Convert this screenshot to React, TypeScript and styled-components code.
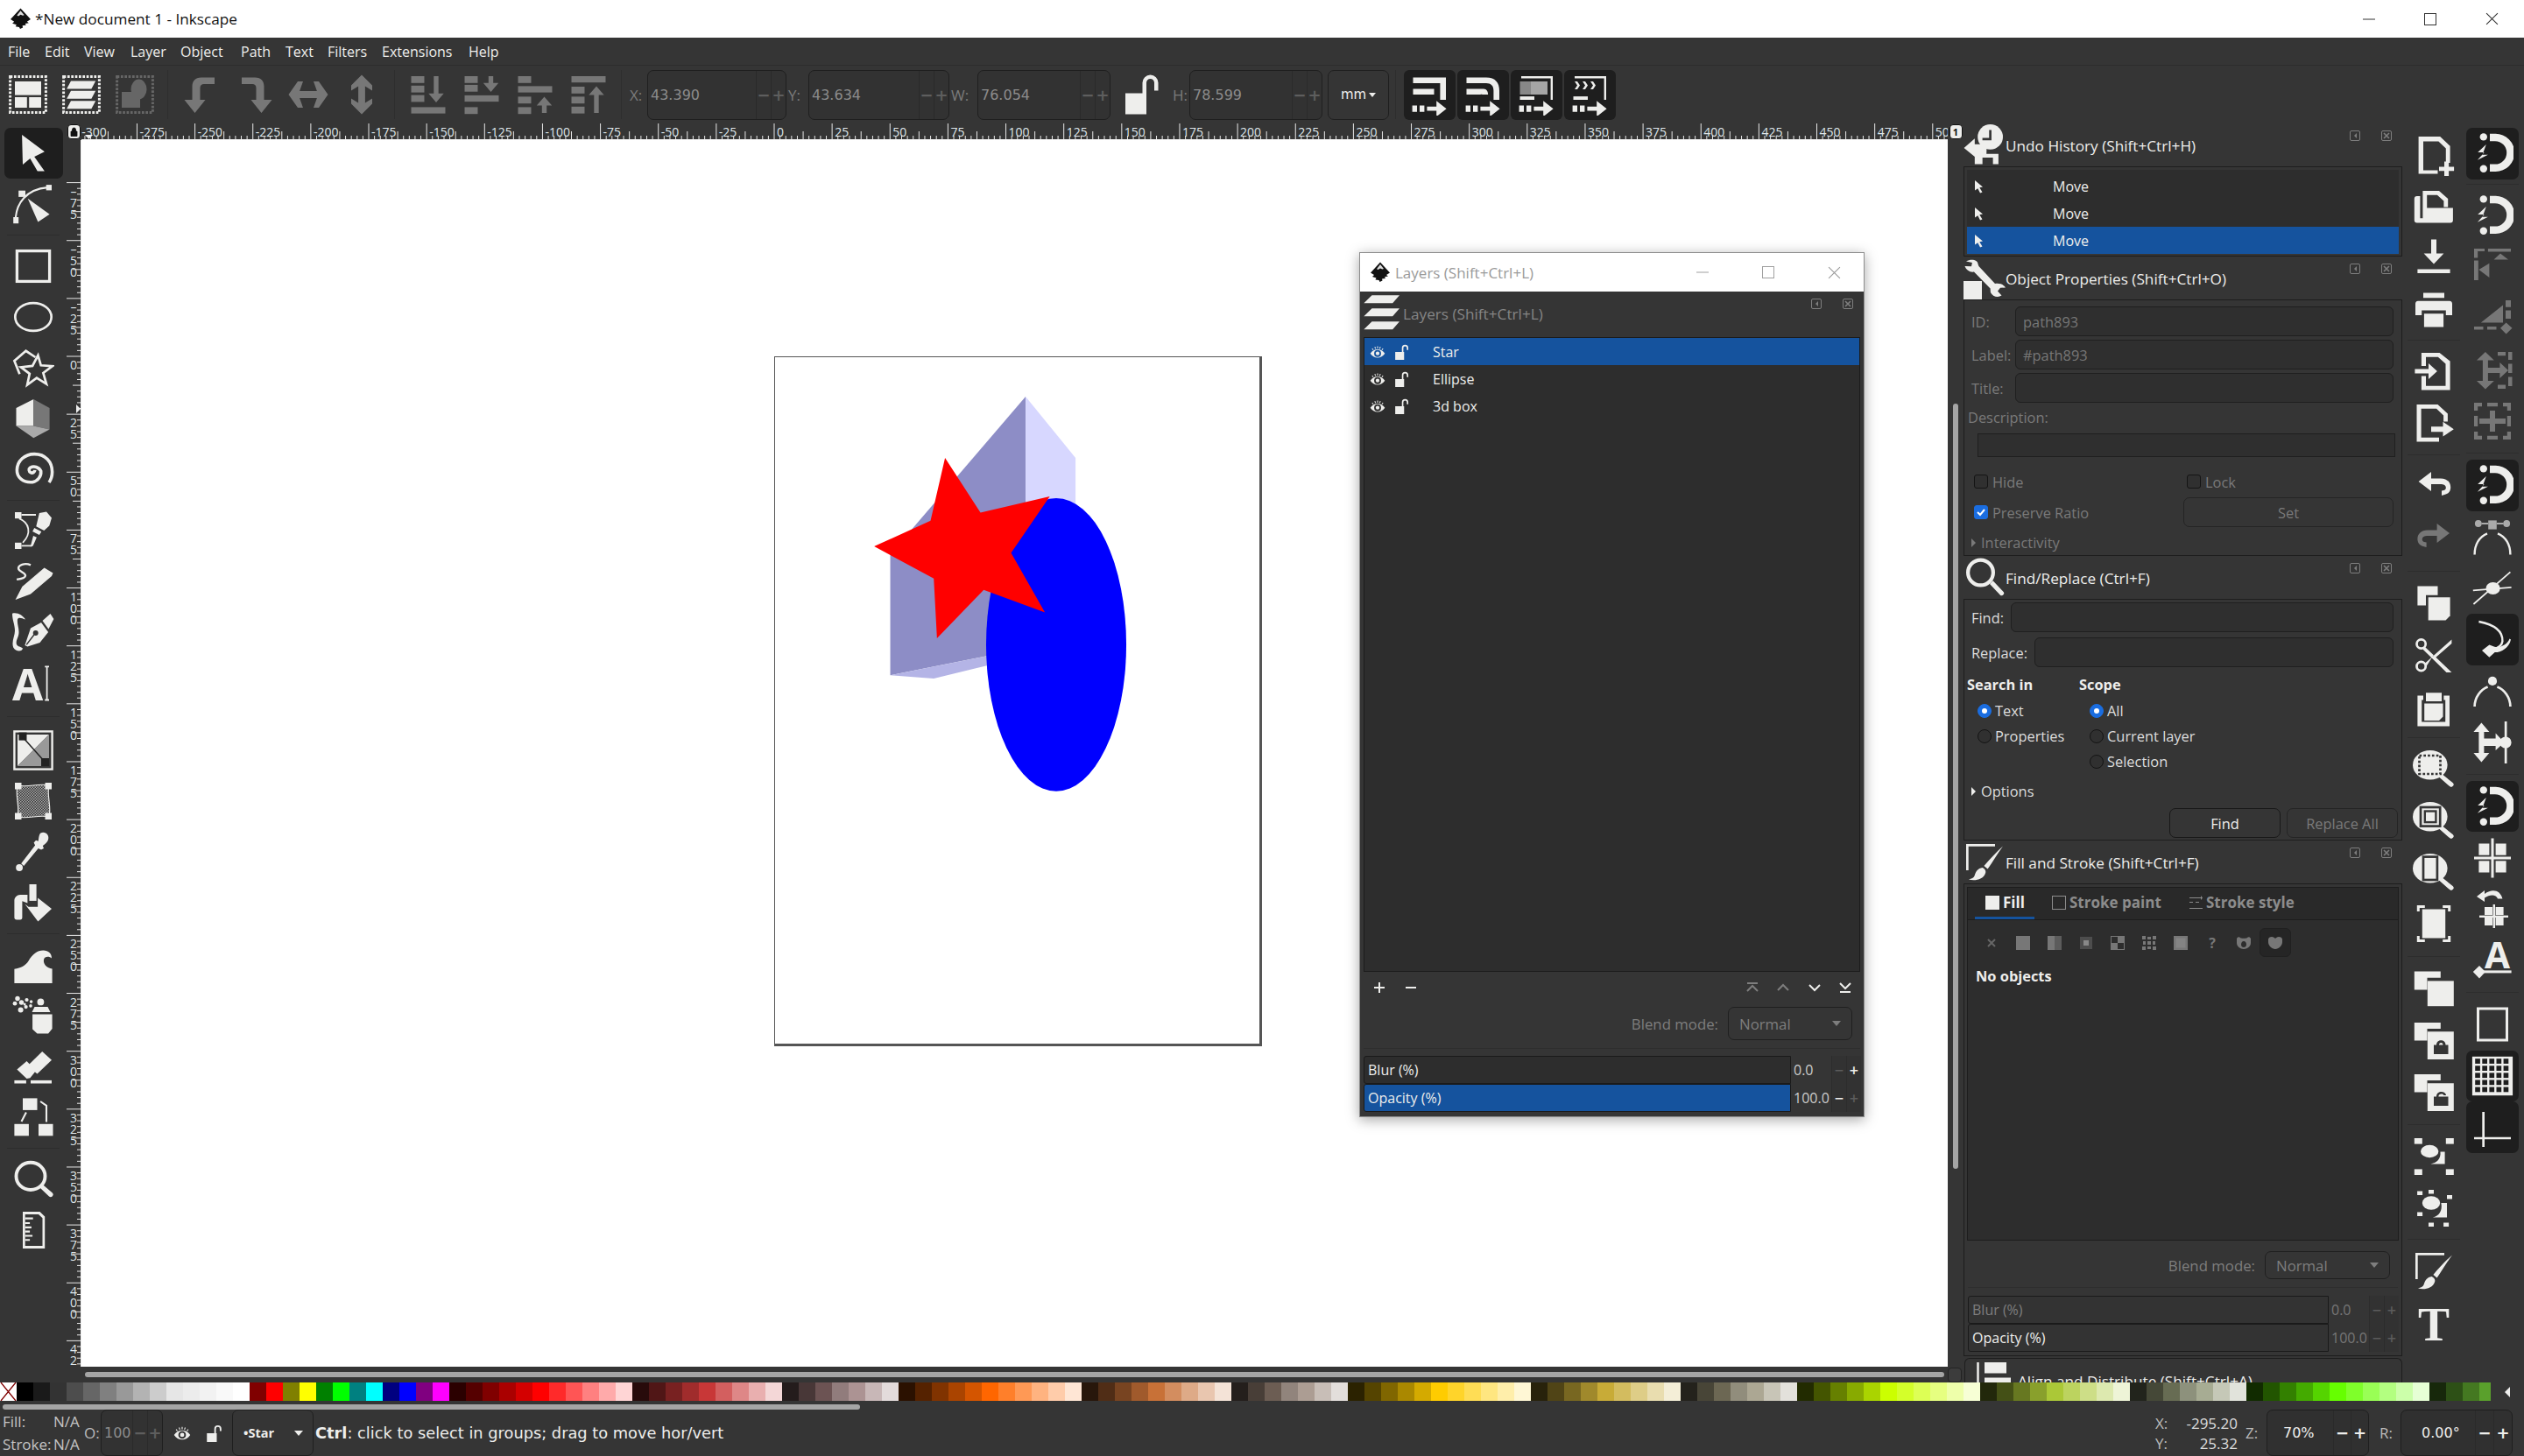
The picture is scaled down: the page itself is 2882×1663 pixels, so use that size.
import React from 'react';
import styled, { createGlobalStyle } from 'styled-components';

const UI = `"Open Sans", "Noto Sans", "Liberation Sans", sans-serif`;
const WIDE = `"DejaVu Sans", "Open Sans", sans-serif`;
const BG = '#353535';
const DARK = '#1e1e1e';
const FIELD = '#2d2d2d';
const LINE = '#1f1f1f';
const LITE = '#eeeeec';
const DIM = '#777777';
const BLUE = '#15539e';

const Global = createGlobalStyle`
  html, body { margin: 0; padding: 0; background: ${BG}; }
  body { font-family: ${UI}; font-size: 16px; color: ${LITE}; }
  * { box-sizing: border-box; }
`;

/* ---------- icons ---------- */
const IconSvg = styled.svg<{ $s: number; $c: string }>`
  width: ${p => p.$s}px;
  height: ${p => p.$s}px;
  flex: none;
  display: block;
  color: ${p => p.$c};
  fill: currentColor;
  font-family: ${UI};
`;
const Ico = ({ s = 48, c = LITE, children }: { s?: number; c?: string; children: React.ReactNode }) => (
  <IconSvg $s={s} $c={c} viewBox="0 0 16 16">{children}</IconSvg>
);
const L = (p: React.SVGProps<SVGPathElement>) => (
  <path fill="none" stroke="currentColor" strokeWidth={1} {...p} />
);

const Dotted = () => (
  <rect x="1.2" y="1.2" width="13.6" height="13.6" fill="none" stroke="currentColor" strokeWidth="1" strokeDasharray=".9 .55" />
);
const Magnet = () => (
  <>
    <path d="M7 .6h2.2a7.2 7.2 0 0 1 0 14.4H7v-2.8h2a4.4 4.4 0 0 0 0-8.8H7z" />
    <circle cx="4.6" cy="1.8" r="1.4" />
    <circle cx="4.6" cy="13.9" r="1.4" />
    <path d="M5.6 4.7 2.4 7.7h2.5L2.3 10.6 6.3 8.6H4.2z" />
  </>
);
const Lens = () => (
  <>
    <ellipse cx="6.6" cy="6.6" rx="6.6" ry="5.6" />
    <path d="M10 11.2l1.3-1 3.9 3.1a.9.9 0 0 1-1.2 1.4z" />
  </>
);
const Parallelograms = ({ y = [2, 6.6, 11.2] }: { y?: number[] }) => (
  <>{y.map(v => <path key={v} d={`M4 ${v}H13.4L11.8 ${v + 3}H2.4z`} />)}</>
);
const Bars = ({ ys }: { ys: number[] }) => (
  <>{ys.map(v => <rect key={v} x="1.5" y={v} width="5" height="2.6" />)}</>
);
const BigBar = ({ y }: { y: number }) => <rect x="1.5" y={y} width="13" height="2.4" />;
const ArrowDown = ({ x, y1, y2 }: { x: number; y1: number; y2: number }) => (
  <path d={`M${x - .9} ${y1}h1.8V${y2 - 3.4}h2L${x} ${y2}l-2.9-3.4h2z`} />
);
const ArrowUp = ({ x, y1, y2 }: { x: number; y1: number; y2: number }) => (
  <path d={`M${x - .9} ${y2}h1.8V${y1 + 3.4}h2L${x} ${y1}l-2.9 3.4h2z`} />
);
const SmallArrow = () => <path d="M1.2 12.2h1.8v2.4H1.2zM4 12.2h1.8v2.4H4zM6.8 12.6h3.6v-2.2l3.8 3-3.8 3v-2.2H6.8z" />;

const tools: Record<string, React.ReactNode> = {
  selector: <path d="M3.7 1 12.3 7.4 8.4 9.3 12.3 14.8H9.6L6.8 10 4 12.3z" />,
  node: (
    <>
      <L d="M1.3 13C1.8 8 5 2.4 13.4 1.7" strokeWidth=".7" />
      <rect x=".4" y="13" width="2" height="2.4" />
      <rect x="2.4" y="2.9" width="2.6" height="2.4" />
      <rect x="12.9" y=".7" width="2.1" height="2.1" />
      <path d="M5.9 5.9 14.2 11.9 9.8 14.8z" />
    </>
  ),
  rect: <rect x="1.8" y="2.2" width="12.4" height="11.6" fill="none" stroke="currentColor" strokeWidth="1.1" />,
  ellipse: <ellipse cx="8" cy="8" rx="6.9" ry="5.3" fill="none" stroke="currentColor" strokeWidth=".9" />,
  star: (
    <>
      <L d="M2.800 10.400 .8 5.400 5.200 1.600 8.800 4" strokeWidth=".9" />
      <polygon points="9.800,3.300 10.900,7.100 15.300,7.400 11.800,10 13,14.200 9.300,11.900 5.700,14.500 6.600,10.300 3.300,7.800 7.700,7.300" fill="none" stroke="currentColor" strokeWidth=".9" />
    </>
  ),
  box: (
    <>
      <path d="M1.5 4 8.100.7V10.800H1.500z" />
      <path d="M8.100.7 14.200 4V12.200L8.100 10.800z" fill="#777" />
      <path d="M1.500 10.800H8.100L14.200 12.200 8.100 15.400z" fill="#aaa" />
    </>
  ),
  spiral: <L strokeWidth="1.200" d="M8.600 8.300a1.100 1.100 0 1 1-1.800-.9 2.900 2.900 0 0 1 4.100 1.300 3.900 3.900 0 0 1-3.200 4.200C4 13.200 1.700 11 1.800 8.200 1.900 4.800 4.700 2.200 8.400 2.200c4.200 0 6.800 3 6.800 6.800 0 1.600-.5 3-1.200 4" />,
  bezier: (
    <>
      <rect x="1" y="1" width="2.500" height="2.400" />
      <rect x="1" y="12.600" width="2.500" height="2.400" />
      <L d="M3.500 2H9M3.500 13.800H7.500M2.600 3.400C6.500 5 7.500 9 4 12.600" strokeWidth=".6" />
      <path d="M10.300 1.300 13 .8l2 2.400-.9 3-2 1.800-3-1.600zM8.400 7l2.700 1.400-.8 1.300-2.600-1.400zM8 10l1.300.6-1.400 3.200-1 .4z" />
    </>
  ),
  pencil: (
    <>
      <L d="M7 1.800C4.800.800 2 1.800 2.400 3.300c.3 1.200 2.600 1.300 2.600 2.500 0 .8-2 1.300-3.300 1.500" strokeWidth=".8" />
      <path d="M1.200 15 3.800 10 12.200 2.800 15.500 4.800 15 6 7 12.800z" />
    </>
  ),
  callig: (
    <>
      <path d="M0 .9C2 .4 4 1.600 5 3.200 3.500 2.500 2.200 2.200 2 3.200 1.800 5 2.500 6 2.500 8 2.500 10 1.300 11 1.600 12.500 2 13.700 3.500 13.500 4 14.200 3.800 15.600 1.200 15.500.4 13.800-.4 11.500 1 9.500 1 7.500 1 5 0 3.500 0 .9z" />
      <path d="M4.800 13 7 6.500 11 4.300 13.700 8 10.500 12 5.800 13.500z" />
      <circle cx="8.900" cy="8.300" r="1" fill={BG} />
      <path d="M5.400 12.800 8.300 9" stroke={BG} strokeWidth=".5" />
      <path d="M11.500 3.700 14.500 1 15.800 3 13.800 6.800z" />
    </>
  ),
  text: (
    <>
      <text x="0" y="14.500" fontSize="17" fontWeight="700">A</text>
      <L d="M12.400 1.800H14M12.400 14.500H14M13.200 1.800V14.500" strokeWidth=".6" />
    </>
  ),
  gradient: (
    <>
      <rect x=".8" y=".8" width="14.400" height="14.400" fill="none" stroke="currentColor" strokeWidth=".8" />
      <path d="M2 2H14L2 14z" />
      <path d="M14 2V14H2z" fill="#999" />
      <rect x="2.500" y="1.200" width="3" height="3" fill="#222" />
      <rect x="11" y="11" width="3" height="3" fill="#222" />
      <L d="M4 3 12.500 12.500" stroke="#222" strokeWidth=".5" />
    </>
  ),
  mesh: (
    <>
      <defs>
        <pattern id="meshchk" width="1" height="1" patternUnits="userSpaceOnUse">
          <rect width="1" height="1" fill="#333" />
          <rect width=".5" height=".5" fill="#aaa" />
          <rect x=".5" y=".5" width=".5" height=".5" fill="#aaa" />
        </pattern>
      </defs>
      <path d="M2 2C6 3 10 1 14 2 13 6 15 10 14 14 10 13 6 15 2 14 3 10 1 6 2 2z" fill="url(#meshchk)" stroke="currentColor" strokeWidth=".4" />
      <rect x="1" y="1" width="2.500" height="2.500" />
      <rect x="12.500" y="1" width="2.500" height="2.500" />
      <rect x="1" y="12.500" width="2.500" height="2.500" />
      <rect x="12.500" y="12.500" width="2.500" height="2.500" />
    </>
  ),
  dropper: (
    <>
      <path d="M10.800.8c1.800-.8 3.600.8 2.800 2.800-.3.800-1.300 1.500-2 2.100l.4 1-1 .5-1.100-.5-5.500 6.600-1-.9 5.300-6.900-.5-1 .8-.9.9.3C10.100 3 10.100 1.300 10.800.8z" />
      <circle cx="2.700" cy="14" r="1.300" />
    </>
  ),
  bucket: (
    <>
      <path d="M6.500 1H9.200V7.300H6.500z" />
      <path d="M.8 7.200C.8 6 1.800 5 3 5h2.800v3.200L3.800 7.400v6.200a.9.9 0 0 1-1 .9H1.700a.9.9 0 0 1-.9-.9z" />
      <path d="M4.800 8.500 6.200 9.600H9.700V6.200L15 10.300 9.800 15.200z" />
    </>
  ),
  tweak: <path d="M.8 15V9.600c2.600-.4 4.200-1.300 5.400-3.100C7.600 4 9.500 2.500 11.800 2.500c2 0 3.200 1.200 3.200 3-.9-.8-2.700-.8-3 .5-.3 1.800 1.200 3.300 3.200 3.500V15z" />,
  spray: (
    <>
      <circle cx="2" cy="1.500" r=".9" /><circle cx="1" cy="3.400" r=".8" /><circle cx="3.500" cy="3" r=".9" /><circle cx="5.500" cy="2" r=".7" />
      <circle cx="7.200" cy="2.700" r=".6" /><circle cx="3.200" cy="5.800" r="1" /><circle cx="5.200" cy="4.700" r=".7" /><circle cx="7" cy="4.300" r=".6" />
      <circle cx="4.700" cy="3.700" r=".5" /><circle cx="10.800" cy="2.800" r="1.300" />
      <path d="M8.500 4.700h5l1 2h-7zM7.700 7.500h7.500V13l-1.500 1.800H9.500L7.700 13.200z" />
    </>
  ),
  eraser: (
    <>
      <path d="M5.800 7.800 11.400 2.300 15 5.600 9.500 10.800z" />
      <path d="M.8 8.200 4.500 5l3.500 3.700-2.200 2.700-1.300.3z" transform="translate(1 1)" />
      <rect x=".8" y="13.300" width="4.500" height="1.200" /><rect x="7" y="13.300" width="8" height="1.200" />
    </>
  ),
  connector: (
    <>
      <rect x="4" y=".8" width="5.500" height="4.500" />
      <rect x=".8" y="10.600" width="5.500" height="4.500" />
      <rect x="10" y="10.600" width="5.500" height="4.500" />
      <L d="M10.700 2 13 3.600V9.800M5.300 6.200 3.500 9.700" strokeWidth=".7" />
    </>
  ),
  zoom: (
    <>
      <ellipse cx="7" cy="6.800" rx="5.500" ry="5.200" fill="none" stroke="currentColor" strokeWidth="1.300" />
      <path d="M10.500 11.200l1.200-1.100 3.500 3a.9.9 0 0 1-1.200 1.400z" />
    </>
  ),
  measure: (
    <>
      <path fillRule="evenodd" d="M4 1H10.500L12.400 2.800V15H4zM4.900 2V14H11.500V3.400L10 2z" />
      <path d="M4.900 3.200h3v.7h-3zM4.900 5h1.800v.7H4.900zM4.900 6.600h2.400v.7H4.900zM4.900 8.200h1.800v.7H4.900zM4.900 9.800h2.800v.7H4.900zM4.900 11.400h1.800v.7H4.900z" />
    </>
  ),
};

const commands: Record<string, React.ReactNode> = {
  newDoc: <path d="M2.200 1H10.400L14.200 4.600V11H12.600V5.500L9.800 2.800H4V13.800H9.500V15.200H2.200zM12 10.500h1.700v2h2v1.600h-2v2H12v-2h-2v-1.600h2z" />,
  open: <path d="M3.800 6V2H10L13.400 5V8.200H11.800V5.800L9.300 3.600H5.400V8.500H15.300V13.200A1 1 0 0 1 14.300 14.200H1.600A1 1 0 0 1 .6 13.200V5A1 1 0 0 1 1.600 4H2.800V12.400H3.800V6z" />,
  save: <path d="M7 .8H9V6.200H11.800L8 10.200 4.200 6.200H7zM1.800 12.200H14.200V13.700H1.800z" />,
  print: <path d="M4 1.500H12V3.400H4zM2 4.600H14A1.100 1.100 0 0 1 15 5.700V10H12.600V8.200H3.400V10H1V5.700A1.100 1.100 0 0 1 2 4.600zM4.300 9.400H11.700V14.500H4.300z" />,
  importDoc: <path d="M3.300 1H10.200L14.200 4.200V15.200H3.300V9.800H5V13.600H12.500V5.200L9.600 2.600H5V6H3.300zM.8 7.200H6V5l3.300 3L6 11V8.800H.8z" />,
  exportDoc: <path d="M1.500 1H9.500L13.300 4.500V7.500H11.700V5.200L9 2.600H3.200V13.600H10V15.200H1.500zM7 9.400H11.500V7.600L15.600 10.400 11.500 13.200V11.400H7z" />,
  undo: <path d="M2.200 6 7 2.300V4.800H10.600C13.400 4.800 14.800 6.800 14.300 9 14 10.400 12.800 11 11 11.300V9.500C12.300 9.300 12.600 8.900 12.600 8.300 12.600 7.500 11.800 7 10.400 7H7V9.700z" />,
  redo: <path d="M14 6 9.200 2.300V4.800H5.600C2.800 4.800 1.400 6.800 1.900 9 2.200 10.400 3.400 11 5.200 11.300V9.500C3.900 9.300 3.600 8.900 3.600 8.300 3.600 7.500 4.400 7 5.800 7H9.200V9.700z" />,
  dup: (
    <>
      <path d="M1.800 1.200H9.500V4.600H5V8.500H1.800z" />
      <path d="M5.900 5.400H14.200V12.400L12.500 14.200H5.900z" />
    </>
  ),
  cut: (
    <>
      <circle cx="3.200" cy="3.500" r="1.700" fill="none" stroke="currentColor" strokeWidth=".9" />
      <circle cx="3.200" cy="12" r="1.700" fill="none" stroke="currentColor" strokeWidth=".9" />
      <path d="M4.500 4.500 14.800 14.300H12.800L3.800 5.500zM4.500 11 14.800 1.800V3.300L8.800 8.600 7.800 7.800 5.300 11.800z" />
    </>
  ),
  paste: (
    <>
      <path d="M1.800 3.500H4V5.200H3.400V13.500H12.400V5.200H11.800V3.500H14V15.200H1.800z" />
      <path d="M5 2.400H11V5.700H5zM4.400 6.500H11.500V11.500L10 13H4.400z" />
    </>
  ),
  zoomSel: (
    <>
      <Lens />
      <rect x="2.500" y="3" width="8" height="7" fill="none" stroke={BG} strokeWidth=".9" strokeDasharray=".9 .7" />
    </>
  ),
  zoomDraw: (
    <>
      <Lens />
      <rect x="3" y="3" width="7.400" height="7.200" fill="none" stroke={BG} strokeWidth=".9" />
      <rect x="4.600" y="4.500" width="4.200" height="4.200" fill="none" stroke={BG} strokeWidth=".8" />
    </>
  ),
  zoomPage: (
    <>
      <Lens />
      <rect x="4" y="2.200" width="5.300" height="8.800" fill="none" stroke={BG} strokeWidth=".9" />
    </>
  ),
  zoomCenter: (
    <>
      <path d="M1.600 1H4.600V2H2.600V3.300H1.600zM11.400 1H14.400V3.300H13.400V2H11.400zM1.600 12.700H2.600V14H4.600V15H1.600zM13.400 12.700H14.400V15H11.400V14H13.400z" />
      <rect x="3.600" y="2.500" width="8.800" height="11" />
    </>
  ),
  group: (
    <>
      <path d="M.6 1.200H10.600V3.600H5.500V8.200H.6z" />
      <path d="M5.600 4.800H15.600V14.400H5.600z" />
    </>
  ),
  groupLock: (
    <>
      <path d="M.6 1H10.600V3.300H5.500V7.800H.6z" />
      <path fillRule="evenodd" d="M5.600 4.400H15.600V15H5.600zM8 9.500V13H13.500V9.500H12.500C12.500 7.200 9 7.200 9 9.500zM10 9.500C10 8.400 11.500 8.400 11.500 9.500z" />
    </>
  ),
  groupUnlock: (
    <>
      <path d="M.6 1H10.600V3.300H5.500V7.800H.6z" />
      <path fillRule="evenodd" d="M5.600 4.400H15.600V15H5.600zM8 9.500V13H13.500V9.500H9.800C9.800 8.300 11.500 8.300 11.800 9H12.700C12.400 7.200 9 7.200 9 9.500z" />
    </>
  ),
  objOrigin: (
    <>
      <rect x=".6" y="1" width="3" height="2.200" /><rect x="12.600" y="1" width="3" height="2.200" />
      <rect x=".6" y="12.800" width="3" height="2.200" /><rect x="12.600" y="12.800" width="3" height="2.200" />
      <ellipse cx="6.400" cy="6" rx="3.400" ry="2.400" />
      <path d="M10.500 6.200H12.200V10.800H6.800C9 10.500 10.800 9 10.500 6.200z" />
    </>
  ),
  objAlign: (
    <>
      <rect x="1.700" y="1.500" width="2" height="1.500" /><rect x="6" y="1" width="2" height="1.500" /><rect x="13" y="3" width="2" height="1.500" />
      <rect x="1.700" y="9.500" width="2" height="1.500" /><rect x="6" y="13.500" width="2" height="1.500" /><rect x="11.700" y="13.500" width="2" height="1.500" />
      <ellipse cx="7" cy="6" rx="3.400" ry="2.600" />
      <path d="M10.800 6H13V11.500H7.600C10 11 11.400 9 10.800 6z" />
    </>
  ),
  fillStroke: (
    <>
      <path d="M1 1H12V1.900H1.900V11H1z" />
      <path d="M15 1.800C13 4.500 11 8 9.200 10.500L7.800 9.300C10 6.800 12.500 4 15 1.800zM7.200 10c-1.700.3-2.500 1.300-3 3.100-.2.700-1.200 1.200-2.200 1.400 2.200.6 5.600.2 6.400-2.600.2-.8-.3-1.500-1.200-1.900z" />
    </>
  ),
  textFont: <text x="8" y="14.500" fontSize="18" fontWeight="700" textAnchor="middle" fontFamily='"Liberation Serif", serif'>T</text>,
};

const gridCells: React.ReactNode[] = [];
for (let r = 0; r < 5; r++) {
  for (let c = 0; c < 5; c++) {
    gridCells.push(<rect key={`${r}-${c}`} x={1.4 + c * 2.7} y={1.400 + r * 2.7} width="1.900" height="1.900" fill={DARK} />);
  }
}

const snapIcons: Record<string, React.ReactNode> = {
  magnet: <Magnet />,
  bbox: (
    <g fill={DIM}>
      <path d="M1 1H5V2H2.400V4.500H1zM1 5.500H2.600V13H1zM6.300 1H15V2.200H6.300zM2.800 9 6.800 6.600V12zM8.500 5.200 11 2.800 14 5.200z" />
    </g>
  ),
  bboxEdge: (
    <g fill={DIM}>
      <path d="M13 1H15V3.600H13zM13 4.800H15V8H13zM3.600 9.500 12 2.800V9.500zM1 11H4.500V12.200H1zM6 11H9.500V12.200H6zM11 11.600 13.200 9.500 15.500 11.600 13.200 13.800z" />
    </g>
  ),
  bboxCenter: (
    <g fill={DIM}>
      <path d="M10 1H13V2.400H10zM14 1H15.500V4H14zM14 5.500H15.500V9H14zM14 10.500H15.500V14H14zM10 13.500H13V15H10zM5.300 1 8.600 4.200H6.300V7H10.800V5L14 8 10.800 11V9H6.300V12H8.600L5.300 15.200 2 12H4.300V4.200H2z" />
    </g>
  ),
  bboxCross: (
    <g fill={DIM}>
      <path d="M1 1H4V2.400H2.400V4H1zM6 1H10V2.400H6zM12 1H15V4H13.600V2.400H12zM1 6H2.400V10H1zM13.600 6H15V10H13.600zM1 12H2.400V13.600H4V15H1zM6 13.600H10V15H6zM12 13.600H13.600V12H15V15H12zM7 4H9V7H13V9H9V12H7V9H3V7H7z" />
    </g>
  ),
  nodesHandle: (
    <>
      <path d="M1.200 14.800C1.200 11 3 8 6 6.800M14.800 14.800C14.800 11 13 8 10 6.800" fill="none" stroke="currentColor" strokeWidth=".8" />
      <rect x="6.400" y="1.800" width="3.200" height="3.400" fill="#aaa" />
      <circle cx="2.600" cy="3" r="1.300" fill="#aaa" /><circle cx="13.400" cy="3" r="1.300" fill="#aaa" />
      <path d="M3.800 3H6.400M9.600 3H12.200" stroke="#aaa" strokeWidth=".6" />
    </>
  ),
  intersect: (
    <>
      <ellipse cx="8.200" cy="8" rx="2.700" ry="2.300" />
      <path d="M.6 8.800 15.200 7.600M.8 14 14.800 1.800" stroke="currentColor" strokeWidth=".6" />
    </>
  ),
  path: (
    <>
      <path d="M2.800 1C8 2 12 4 11.800 8.500 11.600 10 10 11 8.800 11.500" fill="none" stroke="currentColor" strokeWidth=".8" />
      <path d="M8.800 10.600C11 11 13.600 9.800 14.500 7.500L15 7.800C14.300 11 11.500 12.600 8.900 12.700L6.800 14.600 4 12 6.800 9.800z" />
    </>
  ),
  smooth: (
    <>
      <path d="M1.200 14C1.200 10.500 3.500 7.500 6.200 6.500M14.800 14C14.800 10.500 12.500 7.500 9.800 6.500" fill="none" stroke="currentColor" strokeWidth=".9" />
      <circle cx="8" cy="4.300" r="1.700" />
    </>
  ),
  midpoint: (
    <>
      <path d="M3.800.5 6.800 4H4.800V6.500H9.200V4.500L12.500 8 9.200 11V9.300H4.800V12H6.800L3.800 15.500.8 12H2.800V4H.8z" />
      <circle cx="13" cy="8" r="2.200" />
      <rect x="12.600" y="0" width=".9" height="16" />
    </>
  ),
  guide: (
    <>
      <rect x="2.800" y="2.500" width="4" height="4.400" /><rect x="9.200" y="2.500" width="4" height="4.400" />
      <rect x="2.800" y="9.100" width="4" height="4.400" /><rect x="9.200" y="9.100" width="4" height="4.400" />
      <rect x="1" y="7.500" width="14" height="1" /><rect x="7.500" y=".5" width="1" height="15" />
    </>
  ),
  guideGrid: (
    <>
      <path d="M2 3 5 .7V2C8-.2 11 .6 11.800 3.800H10C9.400 2.200 7.200 2 5 3.500V5z" />
      <rect x="5" y="7" width="3" height="3" /><rect x="9.200" y="7" width="3" height="3" />
      <rect x="5" y="11" width="3" height="3" /><rect x="9.200" y="11" width="3" height="3" />
      <rect x="3" y="10.200" width="11" height=".8" /><rect x="8.200" y="6" width=".8" height="9" />
    </>
  ),
  textBase: (
    <>
      <text x="9.800" y="11" fontSize="14" fontWeight="700" textAnchor="middle">A</text>
      <rect x="4.200" y="11.800" width="11" height="1" />
      <path d="M.6 12.300 3 10l2.300 2.300L3 14.800z" />
    </>
  ),
  page: <rect x="2.500" y="2" width="11" height="12" fill="none" stroke="currentColor" strokeWidth="1" />,
  grid: (
    <>
      <rect x=".3" y=".6" width="15.400" height="14.800" />
      {gridCells}
    </>
  ),
  guides: <path d="M4.100 2H5V11.600H15V12.400H5V15.300H4.100V12.400H1V11.600H4.100z" />,
};

const InkLogo = ({ s = 24 }: { s?: number }) => (
  <svg width={s} height={s} viewBox="0 0 24 24" style={{ flex: 'none' }}>
    <path fill="#111" d="M12 .5 23 12.500 19 15l2 1.500-4 .800 1 1.700-4 .500.500 2-3 1.500-1-2-4-.500 1-2L3 17l2-2-4-2.500z" />
    <path fill="#ddd" d="M12 3 16 8l-1.600.5L12 7.500 9.600 9 8 8.200z" />
    <path fill="#fff" d="M7 13.500l2 1.200M15 13l2-1" />
  </svg>
);

/* ---------- chrome ---------- */
const Shell = styled.div`
  width: 2882px;
  height: 1663px;
  background: ${BG};
  display: flex;
  flex-direction: column;
  overflow: hidden;
`;
const TitleBar = styled.header`
  height: 43px;
  background: #fff;
  color: #111;
  display: flex;
  align-items: center;
  padding-left: 11px;
  gap: 4px;
  font-size: 17.2px;
  flex: none;
`;
const TitleText = styled.span`
  flex: 1;
`;
const WinBtn = styled.div`
  width: 70px;
  height: 100%;
  display: flex;
  align-items: center;
  justify-content: center;
`;
const WinGroup = styled.div`
  display: flex;
  height: 100%;
  margin-right: 2px;
`;
const MenuBar = styled.nav`
  height: 32px;
  flex: none;
  display: flex;
  align-items: center;
  border-bottom: 1px solid #2d2d2d;
  font-size: 16px;
`;
const MenuItem = styled.span<{ $w: number }>`
  width: ${p => p.$w}px;
  padding-left: 9px;
  flex: none;
`;
const ToolBar = styled.div`
  height: 66px;
  flex: none;
  display: flex;
  align-items: center;
  padding-left: 1px;
`;
const TopBtn = styled.div<{ $w?: number; $pl?: number }>`
  width: ${p => p.$w ?? 61}px;
  height: 57px;
  display: flex;
  align-items: center;
  justify-content: center;
  padding-left: ${p => p.$pl ?? 0}px;
  flex: none;
`;
const TopSep = styled.div`
  width: 1px;
  height: 56px;
  background: #2e2e2e;
  margin: 0 7px;
  flex: none;
`;
const TopLabel = styled.span<{ $w: number }>`
  width: ${p => p.$w}px;
  padding-left: 2px;
  color: #7b7b7b;
  font-size: 17px;
  flex: none;
`;
const Spin = styled.div<{ $w: number; $h?: number; $lit?: boolean }>`
  width: ${p => p.$w}px;
  height: ${p => p.$h ?? 57}px;
  border: 1.5px solid ${LINE};
  border-radius: 7px;
  display: flex;
  align-items: center;
  background: ${p => (p.$lit ? '#303030' : '#323232')};
  color: ${p => (p.$lit ? LITE : '#8c8c8c')};
  flex: none;
  font-family: ${WIDE};
  font-size: 16px;
`;
const SpinValue = styled.span<{ $pad?: number }>`
  flex: 1;
  padding-left: ${p => p.$pad ?? 3}px;
  white-space: nowrap;
`;
const SpinCell = styled.span<{ $w?: number; $lit?: boolean }>`
  width: ${p => p.$w ?? 17}px;
  height: 100%;
  border-left: 1px solid #2a2a2a;
  display: flex;
  align-items: center;
  justify-content: center;
  color: ${p => (p.$lit ? LITE : '#5e5e5e')};
  font-size: 18px;
  font-weight: 600;
  flex: none;
`;
const UnitBox = styled.div`
  width: 70px;
  height: 57px;
  margin-left: 6px;
  border: 1.5px solid ${LINE};
  border-radius: 7px;
  display: flex;
  align-items: center;
  justify-content: center;
  gap: 3px;
  font-family: ${WIDE};
  font-size: 15px;
  flex: none;
`;
const ScaleGroup = styled.div`
  display: flex;
  padding-left: 2px;
  flex: none;
`;
const ScaleBtn = styled.div`
  width: 59px;
  height: 57px;
  border-radius: 6px;
  background: ${DARK};
  margin-right: 2px;
  display: flex;
  align-items: center;
  justify-content: center;
  flex: none;
`;
const Tri = styled.span<{ $dir?: 'down' | 'right' | 'left'; $c?: string; $s?: number }>`
  display: inline-block;
  width: 0;
  height: 0;
  flex: none;
  ${p => {
    const s = p.$s ?? 5;
    const c = p.$c ?? LITE;
    if (p.$dir === 'right') return `border-top:${s}px solid transparent;border-bottom:${s}px solid transparent;border-left:${s}px solid ${c};`;
    if (p.$dir === 'left') return `border-top:${s}px solid transparent;border-bottom:${s}px solid transparent;border-right:${s}px solid ${c};`;
    return `border-left:${s}px solid transparent;border-right:${s}px solid transparent;border-top:${s + 1}px solid ${c};`;
  }}
`;

const Main = styled.div`
  height: 1438px;
  flex: none;
  display: flex;
  overflow: hidden;
`;
const ToolColumn = styled.aside<{ $w: number; $top: number; $ml?: number }>`
  width: ${p => p.$w}px;
  margin-left: ${p => p.$ml ?? 0}px;
  padding-top: ${p => p.$top}px;
  flex: none;
  display: flex;
  flex-direction: column;
  align-items: center;
`;
const ColBtn = styled.div<{ $h: number; $active?: boolean; $w: number }>`
  width: ${p => p.$w}px;
  height: ${p => p.$h}px;
  border-radius: 7px;
  background: ${p => (p.$active ? DARK : 'transparent')};
  display: flex;
  align-items: center;
  justify-content: center;
  flex: none;
`;
const ColSep = styled.div<{ $h: number }>`
  height: ${p => p.$h}px;
  width: 60px;
  flex: none;
  display: flex;
  align-items: center;
  &::after {
    content: '';
    width: 100%;
    height: 1px;
    background: #2d2d2d;
  }
`;

/* ---------- canvas ---------- */
const CanvasArea = styled.div`
  width: 2166px;
  flex: none;
  display: flex;
  flex-direction: column;
`;
const RulerRow = styled.div`
  height: 19px;
  display: flex;
  flex: none;
`;
const Corner = styled.div<{ $w: number }>`
  width: ${p => p.$w}px;
  flex: none;
  display: flex;
  align-items: center;
  justify-content: center;
`;
const CornerChip = styled.div`
  width: 15px;
  height: 17px;
  border-radius: 4px;
  background: ${LITE};
  border: 1.5px solid #111;
  color: #111;
  font-size: 11px;
  font-weight: 700;
  display: flex;
  align-items: center;
  justify-content: center;
`;
const RulerSvg = styled.svg`
  display: block;
  flex: none;
  font-family: ${UI};
`;
const CanvasRow = styled.div`
  flex: 1;
  display: flex;
  min-height: 0;
  height: 1401px;
`;
const Surface = styled.div`
  width: 2131px;
  height: 1401px;
  background: #fff;
  position: relative;
  flex: none;
`;
const VTrack = styled.div`
  width: 18px;
  flex: none;
  padding: 301px 0 0 6px;
`;
const VThumb = styled.div`
  width: 6px;
  height: 874px;
  border-radius: 3px;
  background: #a5a5a5;
`;
const HTrack = styled.div`
  height: 18px;
  flex: none;
  padding: 6px 4px 0 21px;
  display: flex;
  gap: 4px;
  align-items: flex-start;
`;
const HThumb = styled.div`
  flex: 1;
  height: 6px;
  border-radius: 3px;
  background: #a5a5a5;
`;
const CmsButton = styled.div`
  width: 16px;
  height: 17px;
  margin-top: -5px;
  margin-right: -2px;
  border-radius: 4px;
  border: 1px solid #222;
  background: #3c3c3c;
  flex: none;
`;
const Page = styled.div`
  position: absolute;
  left: 791px;
  top: 247px;
  width: 557px;
  height: 788px;
  background: #fff;
  border: 1.5px solid #555;
  border-right-width: 3px;
  border-bottom-width: 3px;
`;
const Art = styled.svg`
  display: block;
  width: 100%;
  height: 100%;
  overflow: visible;
`;

/* ---------- floating layers dialog ---------- */
const Float = styled.section`
  position: absolute;
  left: 1459px;
  top: 128px;
  width: 577px;
  height: 988px;
  background: ${BG};
  border: 1px solid #8d8d8d;
  box-shadow: 0 3px 14px rgba(0, 0, 0, .35);
  display: flex;
  flex-direction: column;
`;
const FloatTitle = styled.div`
  height: 44px;
  background: #fff;
  color: #9a9a9a;
  display: flex;
  align-items: center;
  padding-left: 11px;
  gap: 5px;
  font-size: 17px;
  flex: none;
`;
const FloatName = styled.span`
  flex: 1;
`;
const FloatWinBtn = styled.div<{ $w: number }>`
  width: ${p => p.$w}px;
  height: 100%;
  display: flex;
  align-items: center;
  justify-content: center;
  flex: none;
`;
const DlgHeader = styled.div<{ $dim?: boolean; $h?: number }>`
  height: ${p => p.$h ?? 49}px;
  display: flex;
  align-items: flex-end;
  flex: none;
  color: ${p => (p.$dim ? '#858585' : LITE)};
  font-size: 17.2px;
`;
const LayersGlyph = styled.span`
  padding: 0 4px 4px 3px;
  flex: none;
`;
const HeaderLabel = styled.span`
  flex: 1;
  align-self: center;
  white-space: nowrap;
  padding-top: 2px;
`;
const MiniGroup = styled.div`
  display: flex;
  gap: 24px;
  align-self: flex-start;
  padding: 8px 12px 0 0;
`;
const Mini = styled.div`
  width: 12px;
  height: 12px;
  border: 1px solid #7e7e7e;
  border-radius: 2px;
  display: flex;
  align-items: center;
  justify-content: center;
  color: #7e7e7e;
`;
const ListFrame = styled.div`
  margin: 3px 4px 0;
  height: 725px;
  background: ${FIELD};
  border: 1px solid #1c1c1c;
  flex: none;
`;
const LayerRow = styled.div<{ $sel?: boolean }>`
  height: 31px;
  display: flex;
  align-items: center;
  background: ${p => (p.$sel ? BLUE : 'transparent')};
  font-size: 16px;
`;
const LayerEye = styled.span`
  width: 34px;
  padding-left: 6px;
  flex: none;
`;
const LayerLock = styled.span`
  width: 44px;
  flex: none;
`;
const ListTools = styled.div`
  height: 36px;
  display: flex;
  align-items: center;
  padding: 0 3px 0 4px;
  flex: none;
`;
const Spacer = styled.div`
  flex: 1;
`;
const GlyphBtn = styled.span<{ $w?: number; $c?: string }>`
  width: ${p => p.$w ?? 36}px;
  display: flex;
  justify-content: center;
  color: ${p => p.$c ?? LITE};
  flex: none;
`;
const BlendRow = styled.div<{ $pad: string; $h?: number }>`
  display: flex;
  align-items: center;
  justify-content: flex-end;
  gap: 11px;
  padding: ${p => p.$pad};
  color: #7e7e7e;
  font-size: 16.8px;
  flex: none;
`;
const SelectBox = styled.div<{ $w: number; $h: number }>`
  width: ${p => p.$w}px;
  height: ${p => p.$h}px;
  border: 1.5px solid ${LINE};
  border-radius: 7px;
  display: flex;
  align-items: center;
  justify-content: space-between;
  padding: 0 12px;
`;
const HRule = styled.div<{ $top?: number; $bottom?: number }>`
  height: 1px;
  background: #2e2e2e;
  margin: ${p => p.$top ?? 0}px 4px ${p => p.$bottom ?? 0}px;
  flex: none;
`;
const SliderRow = styled.div<{ $lit?: boolean; $h?: number }>`
  height: ${p => p.$h ?? 32}px;
  display: flex;
  align-items: stretch;
  margin: 0 0 0 4px;
  font-size: 16px;
  color: ${p => (p.$lit ? LITE : '#7e7e7e')};
  flex: none;
`;
const SliderTrack = styled.div<{ $bg?: string; $lit?: boolean; $w: number }>`
  width: ${p => p.$w}px;
  background: ${p => p.$bg ?? FIELD};
  border: 1px solid #1a1a1a;
  border-radius: 3px 0 0 3px;
  display: flex;
  align-items: center;
  padding-left: 4px;
  color: ${p => (p.$lit ? LITE : 'inherit')};
  flex: none;
`;
const SliderValue = styled.span<{ $c?: string }>`
  width: 46px;
  padding-left: 3px;
  align-self: center;
  white-space: nowrap;
  flex: none;
  color: ${p => p.$c ?? 'inherit'};
`;
const SliderStep = styled.span<{ $lit?: boolean }>`
  width: 17px;
  display: flex;
  align-items: center;
  justify-content: center;
  background: #323232;
  border-left: 1px solid #2c2c2c;
  color: ${p => (p.$lit ? LITE : '#5c5c5c')};
  font-size: 18px;
  font-weight: 600;
  flex: none;
`;

/* ---------- dock ---------- */
const Dock = styled.div`
  width: 501px;
  flex: none;
  display: flex;
  flex-direction: column;
`;
const Frame = styled.div<{ $h: number; $p?: string }>`
  height: ${p => p.$h}px;
  border: 1.5px solid #1d1d1d;
  padding: ${p => p.$p ?? '0'};
  flex: none;
  display: flex;
  flex-direction: column;
`;
const HistoryList = styled.div`
  background: ${FIELD};
  height: 95px;
  padding-top: 3px;
`;
const HistoryRow = styled.div<{ $sel?: boolean }>`
  height: 31px;
  display: flex;
  align-items: center;
  padding-left: 6px;
  gap: 76px;
  font-size: 16px;
  background: ${p => (p.$sel ? BLUE : 'transparent')};
`;
const FormRow = styled.div<{ $lit?: boolean; $top?: number; $label: number }>`
  display: grid;
  grid-template-columns: ${p => p.$label}px 1fr;
  align-items: center;
  padding: ${p => p.$top ?? 0}px 9px 0 8px;
  color: ${p => (p.$lit ? '#ddd' : '#7a7a7a')};
  font-size: 16.4px;
  flex: none;
`;
const Entry = styled.div<{ $h?: number }>`
  height: ${p => p.$h ?? 34}px;
  background: #2f2f2f;
  border: 1.5px solid ${LINE};
  border-radius: 6px;
  padding-left: 8px;
  display: flex;
  align-items: center;
  color: #777;
`;
const DescLabel = styled.div`
  margin: 6px 0 0 4px;
  height: 22px;
  line-height: 22px;
  color: #7a7a7a;
  font-size: 16.4px;
`;
const DescBox = styled.div`
  height: 27px;
  margin: 7px 7px 0 15px;
  border: 1.5px solid ${LINE};
  background: #2f2f2f;
  flex: none;
`;
const CheckGrid = styled.div`
  display: grid;
  grid-template-columns: 243px 1fr;
  padding: 15px 9px 0 11px;
  color: #7a7a7a;
  font-size: 16.4px;
  row-gap: 0;
  align-items: center;
  flex: none;
`;
const CheckLine = styled.div<{ $h: number }>`
  height: ${p => p.$h}px;
  display: flex;
  align-items: center;
  gap: 5px;
  white-space: nowrap;
`;
const Box = styled.span<{ $on?: boolean }>`
  width: 16px;
  height: 16px;
  border-radius: 3px;
  border: 1px solid ${p => (p.$on ? '#1a6de0' : '#141414')};
  background: ${p => (p.$on ? '#1a6de0' : '#303030')};
  display: flex;
  align-items: center;
  justify-content: center;
  flex: none;
`;
const PlainBtn = styled.div<{ $w?: number; $lit?: boolean; $h?: number; $ml?: number }>`
  ${p => (p.$w ? `width:${p.$w}px;` : '')}
  height: ${p => p.$h ?? 34}px;
  margin-left: ${p => p.$ml ?? 0}px;
  border: 1.5px solid ${p => (p.$lit ? '#181818' : '#242424')};
  border-radius: 7px;
  display: flex;
  align-items: center;
  justify-content: center;
  color: ${p => (p.$lit ? LITE : '#7a7a7a')};
  flex: none;
`;
const Expander = styled.div<{ $lit?: boolean; $top: number }>`
  display: flex;
  align-items: center;
  gap: 6px;
  padding: ${p => p.$top}px 0 0 8px;
  height: auto;
  color: ${p => (p.$lit ? '#ddd' : '#7a7a7a')};
  font-size: 16.4px;
  flex: none;
`;
const ScopeColumns = styled.div`
  display: flex;
  padding: 8px 0 0 3px;
  flex: none;
`;
const ScopeCol = styled.div<{ $w: number }>`
  width: ${p => p.$w}px;
  display: flex;
  flex-direction: column;
`;
const ScopeHead = styled.div`
  font-weight: 700;
  font-size: 16.4px;
  height: 27px;
  color: ${LITE};
`;
const RadioLine = styled.div`
  height: 29px;
  padding-left: 12px;
  display: flex;
  align-items: center;
  gap: 4px;
  font-size: 16.4px;
  color: #ddd;
`;
const Radio = styled.span<{ $on?: boolean }>`
  width: 16px;
  height: 16px;
  border-radius: 50%;
  flex: none;
  background: ${p => (p.$on ? '#1a6de0' : '#303030')};
  border: 1px solid ${p => (p.$on ? '#1a6de0' : '#141414')};
  display: flex;
  align-items: center;
  justify-content: center;
  &::after {
    content: '';
    width: 6px;
    height: 6px;
    border-radius: 50%;
    background: ${p => (p.$on ? '#fff' : 'transparent')};
  }
`;
const ButtonRow = styled.div`
  display: flex;
  justify-content: flex-end;
  gap: 7px;
  padding: 8px 4px 0 0;
  font-size: 16.4px;
  flex: none;
`;
const Notebook = styled.div`
  margin: 3px;
  height: 404px;
  background: ${FIELD};
  border: 1px solid #1d1d1d;
  flex: none;
  display: flex;
  flex-direction: column;
`;
const TabBar = styled.div`
  height: 37px;
  display: flex;
  gap: 8px;
  padding-left: 8px;
  border-bottom: 1px solid #1d1d1d;
  background: #292929;
  flex: none;
`;
const Tab = styled.div<{ $on?: boolean; $w: number }>`
  width: ${p => p.$w}px;
  display: flex;
  align-items: center;
  gap: 4px;
  padding-left: 12px;
  font-weight: 700;
  font-size: 17px;
  color: ${p => (p.$on ? LITE : '#8c8c8c')};
  border-bottom: 3px solid ${p => (p.$on ? BLUE : 'transparent')};
  white-space: nowrap;
  flex: none;
`;
const PaintRow = styled.div`
  display: flex;
  padding: 9px 0 0 9px;
  flex: none;
`;
const PaintBtn = styled.div<{ $on?: boolean }>`
  width: 36px;
  height: 33px;
  display: flex;
  align-items: center;
  justify-content: center;
  border-radius: 6px;
  background: ${p => (p.$on ? '#252525' : 'transparent')};
  border: 1px solid ${p => (p.$on ? '#202020' : 'transparent')};
  flex: none;
`;
const NoObjects = styled.div`
  font-weight: 700;
  font-size: 16.4px;
  padding: 10px 0 0 9px;
  color: ${LITE};
`;
const AlignHeader = styled.div`
  margin: 2px 0 0 1px;
  height: 60px;
  border: 1.5px solid #1d1d1d;
  border-bottom: 0;
  border-radius: 6px 6px 0 0;
  display: flex;
  align-items: flex-start;
  padding: 4px 0 0 12px;
  gap: 8px;
  font-size: 17.2px;
  flex: none;
`;
const AlignLabel = styled.span`
  padding-top: 10px;
  flex: 1;
`;
const AlignCaret = styled.span`
  padding: 16px 28px 0 0;
`;

/* ---------- palette / status ---------- */
const PaletteRow = styled.div`
  height: 21px;
  display: flex;
  flex: none;
  align-items: stretch;
`;
const SwatchStrip = styled.div`
  width: 2825px;
  display: flex;
  overflow: hidden;
  flex: none;
`;
const Swatch = styled.div`
  width: 19px;
  flex: none;
`;
const NoneSwatch = styled.svg`
  width: 19px;
  height: 21px;
  flex: none;
  display: block;
`;
const PaletteEnd = styled.div`
  flex: 1;
  display: flex;
  align-items: center;
  justify-content: flex-end;
  padding-right: 16px;
`;
const PaletteTrack = styled.div`
  height: 10px;
  padding: 4px 0 0 3px;
  flex: none;
`;
const PaletteThumb = styled.div`
  width: 979px;
  height: 6px;
  border-radius: 3px;
  background: #a5a5a5;
`;
const Status = styled.footer`
  height: 53px;
  flex: none;
  display: flex;
  align-items: center;
  padding-right: 13px;
  font-size: 16px;
`;
const FillStroke = styled.div`
  width: 96px;
  flex: none;
  padding-left: 3px;
  display: grid;
  grid-template-columns: 58px 1fr;
  row-gap: 5px;
  color: #c4c4c4;
  line-height: 21px;
  font-size: 17px;
`;
const StatusKey = styled.span<{ $w?: number; $c?: string; $pl?: number }>`
  ${p => (p.$w ? `width:${p.$w}px;` : '')}
  padding-left: ${p => p.$pl ?? 0}px;
  color: ${p => p.$c ?? '#bbb'};
  font-size: 17px;
  flex: none;
`;
const StatusIcon = styled.span<{ $w: number }>`
  width: ${p => p.$w}px;
  display: flex;
  justify-content: center;
  flex: none;
`;
const LayerCombo = styled.div`
  width: 93px;
  height: 53px;
  border: 1.5px solid ${LINE};
  border-radius: 7px;
  display: flex;
  align-items: center;
  justify-content: space-between;
  padding: 0 11px 0 12px;
  font-size: 14.5px;
  font-weight: 700;
  flex: none;
`;
const Message = styled.div`
  flex: 1;
  padding-left: 2px;
  white-space: nowrap;
  font-family: ${WIDE};
  font-size: 17.8px;
`;
const Strong = styled.b`
  font-weight: 700;
`;
const Coords = styled.div`
  width: 94px;
  display: grid;
  grid-template-columns: 1fr auto;
  line-height: 23px;
  flex: none;
  color: #ddd;
  font-size: 17px;
`;
const CoordKey = styled.span`
  color: #bbb;
`;
const Right = styled.span`
  text-align: right;
`;

/* ---------- small shared drawings ---------- */
const EyeIcon = ({ s = 18 }: { s?: number }) => (
  <Ico s={s}>
    <path d="M.6 9.500c3.400-5.600 11.400-5.600 14.800 0-3.400 5.600-11.400 5.600-14.800 0zm7.400-3.500a3.500 3.500 0 1 0 0 7 3.500 3.500 0 0 0 0-7z" fillRule="evenodd" />
    <circle cx="8" cy="9.500" r="1.900" />
    <path d="M2.500 4.500 3.600 6M5.200 2.800l.7 1.900M8 2.200V4.400M10.800 2.800l-.7 1.900M13.500 4.500 12.400 6" stroke="currentColor" strokeWidth=".9" />
  </Ico>
);
const OpenLock = ({ s = 18 }: { s?: number }) => (
  <Ico s={s}>
    <rect x="1" y="8" width="9" height="8" />
    <path d="M8.500 8V4a2.500 2.500 0 0 1 5 0v2" fill="none" stroke="currentColor" strokeWidth="1.500" />
  </Ico>
);
const MiniButtons = () => (
  <MiniGroup>
    <Mini><Tri $dir="left" $s={3} $c="#7e7e7e" /></Mini>
    <Mini>
      <svg width="8" height="8" viewBox="0 0 8 8"><path d="M1 1l6 6M7 1 1 7" stroke="#7e7e7e" strokeWidth="1.600" /></svg>
    </Mini>
  </MiniGroup>
);
const Chev = ({ d, c = LITE }: { d: string; c?: string }) => (
  <svg width="14" height="14" viewBox="0 0 14 14"><path d={d} fill="none" stroke={c} strokeWidth="2" /></svg>
);
const Arrowlet = ({ s = 16 }: { s?: number }) => (
  <Ico s={s}><path d="M3 1 12 8.500 8.300 9.300 11.500 14.500 9 15.500 6.300 10.200 3 12.500z" /></Ico>
);

/* ---------- palette data ---------- */
const hex = (v: number) => Math.round(v).toString(16).padStart(2, '0');
const rgb = (r: number, g: number, b: number) => `#${hex(r)}${hex(g)}${hex(b)}`;
const tints: [number, number][] = [
  [43, 0], [85, 0], [128, 0], [170, 0], [212, 0], [255, 0], [255, 42], [255, 85], [255, 128], [255, 170], [255, 213],
  [40, 11], [80, 22], [120, 33], [160, 44], [200, 55], [211, 95], [222, 135], [233, 175], [244, 215],
  [36, 28], [72, 55], [108, 83], [145, 124], [172, 147], [200, 183], [227, 219],
];
const hues: [number, number, number][] = [[1, 0, 0], [1, .4, 0], [1, .8, 0], [.8, 1, 0], [.4, 1, 0]];
const swatches: string[] = [
  '#000000', '#1a1a1a', '#333333', '#4d4d4d', '#666666', '#808080', '#999999', '#b3b3b3', '#cccccc', '#e6e6e6', '#ececec', '#f2f2f2', '#f9f9f9', '#ffffff',
  '#800000', '#ff0000', '#808000', '#ffff00', '#008000', '#00ff00', '#008080', '#00ffff', '#000080', '#0000ff', '#800080', '#ff00ff',
];
hues.forEach(([r, g, b]) => tints.forEach(([hi, lo]) => {
  swatches.push(rgb(lo + (hi - lo) * r, lo + (hi - lo) * g, lo + (hi - lo) * b));
}));
const visibleSwatches = swatches.slice(0, 149);

/* ---------- rulers ---------- */
const MAJOR = 66.14;
const TopRuler = () => {
  const W = 2131;
  const zero = 884 - 93;
  const items: React.ReactNode[] = [];
  for (let i = -12; i <= 20; i++) {
    const x = zero + i * MAJOR;
    items.push(<path key={`m${i}`} d={`M${x} 0V19`} stroke="#e8e8e8" strokeWidth="1" />);
    items.push(<text key={`t${i}`} x={x + 3} y="15" fontSize="14" fill="#dfe6ea">{i * 25}</text>);
    for (let k = 1; k < 10; k++) {
      const xx = x + k * MAJOR / 10;
      const h = k === 5 ? 10 : 5;
      items.push(<path key={`n${i}-${k}`} d={`M${xx} ${19 - h}V19`} stroke="#e8e8e8" strokeWidth="1" />);
    }
  }
  return (
    <RulerSvg width={W} height={19} viewBox={`0 0 ${W} 19`}>
      {items}
      <path d="M0 18.500H2131" stroke="#f2f2f2" strokeWidth="1" />
      <path d="M4 13h9l-4.500 5z" fill="#eee" />
    </RulerSvg>
  );
};
const LeftRuler = () => {
  const H = 1401;
  const zero = 407 - 160;
  const items: React.ReactNode[] = [];
  for (let i = -3; i <= 17; i++) {
    const y = zero + i * MAJOR;
    items.push(<path key={`m${i}`} d={`M0 ${y}H17`} stroke="#e8e8e8" />);
    String(i * 25).split('').forEach((c, idx) => {
      items.push(<text key={`t${i}-${idx}`} x="8" y={y + 15 + idx * 13} fontSize="14" textAnchor="middle" fill="#dfe6ea">{c === '-' ? '–' : c}</text>);
    });
    for (let k = 1; k < 10; k++) {
      const yy = y + k * MAJOR / 10;
      const w = k === 5 ? 10 : 5;
      items.push(<path key={`n${i}-${k}`} d={`M${17 - w} ${yy}H17`} stroke="#e8e8e8" />);
    }
  }
  return (
    <RulerSvg width={17} height={H} viewBox={`0 0 17 ${H}`}>
      {items}
      <path d="M16.500 0V1401" stroke="#f2f2f2" />
      <path d="M11 302l5 5-5 5z" fill="#eee" />
    </RulerSvg>
  );
};

/* ---------- column data ---------- */
type ColItem = { k: string; active?: boolean; c?: string } | { sep: number };
const leftItems: ColItem[] = [
  { k: 'selector', active: true }, { k: 'node' }, { sep: 13 },
  { k: 'rect' }, { k: 'ellipse' }, { k: 'star' }, { k: 'box' }, { k: 'spiral' }, { sep: 12 },
  { k: 'bezier' }, { k: 'pencil' }, { k: 'callig' }, { k: 'text' }, { sep: 19 },
  { k: 'gradient' }, { k: 'mesh' }, { k: 'dropper' }, { k: 'bucket' }, { sep: 13 },
  { k: 'tweak' }, { k: 'spray' }, { k: 'eraser' }, { k: 'connector' }, { sep: 13 },
  { k: 'zoom' }, { k: 'measure' },
];
const cmdItems: ColItem[] = [
  { k: 'newDoc' }, { k: 'open' }, { k: 'save' }, { k: 'print' }, { sep: 11 },
  { k: 'importDoc' }, { k: 'exportDoc' }, { sep: 14 },
  { k: 'undo' }, { k: 'redo', c: '#777' }, { sep: 16 },
  { k: 'dup' }, { k: 'cut' }, { k: 'paste' }, { sep: 11 },
  { k: 'zoomSel' }, { k: 'zoomDraw' }, { k: 'zoomPage' }, { k: 'zoomCenter' }, { sep: 16 },
  { k: 'group' }, { k: 'groupLock' }, { k: 'groupUnlock' }, { sep: 14 },
  { k: 'objOrigin' }, { k: 'objAlign' }, { sep: 13 },
  { k: 'fillStroke' }, { k: 'textFont' },
];
const snapItems: ColItem[] = [
  { k: 'magnet', active: true }, { sep: 12 },
  { k: 'magnet' }, { k: 'bbox' }, { k: 'bboxEdge' }, { k: 'bboxCenter' }, { k: 'bboxCross' }, { sep: 14 },
  { k: 'magnet', active: true }, { k: 'nodesHandle' }, { k: 'intersect' }, { k: 'path', active: true }, { k: 'smooth' }, { k: 'midpoint' }, { sep: 14 },
  { k: 'magnet', active: true }, { k: 'guide' }, { k: 'guideGrid' }, { k: 'textBase' }, { sep: 14 },
  { k: 'page' }, { k: 'grid', active: true }, { k: 'guides', active: true },
];
const Column = ({ items, set, h, w }: { items: ColItem[]; set: Record<string, React.ReactNode>; h: number; w: number }) => (
  <>
    {items.map((it, i) =>
      'sep' in it ? (
        <ColSep key={i} $h={it.sep} />
      ) : (
        <ColBtn key={i} $h={h} $w={w} $active={it.active}>
          <Ico c={it.c}>{set[it.k]}</Ico>
        </ColBtn>
      ),
    )}
  </>
);

const topGroups: { k: string; c: string; d: React.ReactNode }[][] = [
  [
    { k: 'a', c: LITE, d: <><Dotted /><rect x="3" y="3" width="10" height="5.200" /><rect x="3" y="9" width="4.600" height="4" /><rect x="8.400" y="9" width="4.600" height="4" /></> },
    { k: 'b', c: LITE, d: <><Dotted /><Parallelograms y={[2.800, 6.600, 10.400]} /></> },
    { k: 'c', c: '#666', d: <><Dotted /><ellipse cx="9.500" cy="6" rx="3" ry="3.800" /><rect x="3" y="7" width="7" height="6" /></> },
  ],
  [
    { k: 'd', c: DIM, d: <path d="M13 1.500H8C5.500 1.500 4.500 3 4.500 5V10H1.500L5.500 15 9.500 10H7.500V5.500C7.500 4.500 8 4 9 4H13z" /> },
    { k: 'e', c: DIM, d: <path d="M3 1.500H8C10.500 1.500 11.500 3 11.500 5V10H14.500L10.500 15 6.500 10H8.500V5.500C8.500 4.500 8 4 7 4H3z" /> },
    { k: 'f', c: DIM, d: <path d="M.5 8 4 3H6L4.700 6.700H11.300L10 3H12L15.500 8 12 13H10L11.300 9.300H4.700L6 13H4z" /> },
    { k: 'g', c: DIM, d: <path d="M8 .5 12 4.500V6.500L9.300 4.800V11.200L12 9.500V11.500L8 15.500 4 11.500V9.500L6.700 11.200V4.800L4 6.500V4.500z" /> },
  ],
  [
    { k: 'h', c: DIM, d: <><Bars ys={[1, 4.600, 8.200]} /><ArrowDown x={11} y1={1} y2={11} /><BigBar y={12.800} /></> },
    { k: 'i', c: DIM, d: <><Bars ys={[1, 4.300, 12.800]} /><ArrowDown x={11.500} y1={1} y2={7} /><BigBar y={8.300} /></> },
    { k: 'j', c: DIM, d: <><Bars ys={[1, 8.800, 12.800]} /><BigBar y={4.800} /><ArrowUp x={11.500} y1={8.800} y2={15} /></> },
    { k: 'k', c: DIM, d: <><BigBar y={1} /><Bars ys={[5, 8.800, 12.600]} /><ArrowUp x={11} y1={4.800} y2={15} /></> },
  ],
];
const scaleIcons: React.ReactNode[] = [
  <><path d="M1.500 1.500H14V10H11.800V3.700H1.500zM1.500 5.800H9.500V8H1.500z" /><SmallArrow /></>,
  <><path d="M1.500 1.500H9C12.500 1.500 14 3.500 14 6.500V10H11.800V6.500C11.800 4.700 10.800 3.700 9 3.700H1.500zM1.500 5.800H8C9.200 5.800 9.700 6.800 9.700 8H7.500C7.400 7.900 7 7.900 6.800 8H1.500z" /><SmallArrow /></>,
  <><path d="M2 1H14V10H13.200V1.800H2z" /><path d="M1.500 3H5.500V8H1.500z" fill="#888" /><path d="M5.500 3H12V8H5.500z" fill="#fff" fillOpacity=".6" /><path d="M1.500 8.700H7V10H1.500z" /><SmallArrow /></>,
  <><path d="M2 1H14V10H13.200V1.800H2z" /><path d="M2 3l1 1.500L2 6h1l1-1.500L3 3zM5 3l1 1.500L5 6h1l1-1.500L6 3zM8 3l1 1.500L8 6h1l1-1.500L9 3z" /><path d="M1.500 8.700H7V10H1.500z" /><SmallArrow /></>,
];
const paintIcons: React.ReactNode[] = [
  <path d="M4 4l8 8M12 4l-8 8" stroke="currentColor" strokeWidth="2" />,
  <rect x="0" y="0" width="16" height="16" />,
  <><rect x="0" y="0" width="8" height="16" /><rect x="8" y="0" width="8" height="16" fill="#5c5c5c" /></>,
  <><rect x="1" y="1" width="14" height="14" fill="#4d4d4d" /><rect x="5" y="5" width="6" height="6" fill="#888" /></>,
  <><rect x=".5" y=".5" width="15" height="15" fill="none" stroke="currentColor" /><rect x="8" y="1" width="7" height="7" /><rect x="1" y="8" width="7" height="7" /></>,
  <path d="M0 0h4v4H0zM12 0h4v4h-4zM0 12h4v4H0zM12 12h4v4h-4zM6 1h4v3H6zM6 12h4v3H6zM1 6h3v4H1zM12 6h3v4h-3zM6 6h4v4H6z" />,
  <><rect x="0" y="0" width="16" height="16" /><rect x="2.500" y="2.500" width="11" height="11" fill="#999" opacity=".4" /></>,
  <text x="8" y="14" fontSize="16" fontWeight="700" textAnchor="middle">?</text>,
  <path fillRule="evenodd" d="M0 3c1-2 3-2 4-1 1 .6 1 .8 4 .8s3-.2 4-.8c1-1 3-1 4 1v5c0 4-4 7-8 7s-8-3-8-7zM8 6C6 6 5 8 5 10s1.500 3 3 3 3-1 3-3-1-4-3-4z" />,
  <path d="M0 4c0-2 2-3 4-3s3 1 4 2c1-1 2-2 4-2s4 1 4 3v3c0 4-4 8-8 8s-8-4-8-8z" />,
];

const menus: [string, number][] = [
  ['File', 42], ['Edit', 45], ['View', 53], ['Layer', 57], ['Object', 69], ['Path', 51], ['Text', 48], ['Filters', 62], ['Extensions', 99], ['Help', 60],
];

const CloseX = ({ c, s }: { c: string; s: number }) => (
  <svg width={s} height={s} viewBox="0 0 14 14"><path d="M1 1l12 12M13 1 1 13" stroke={c} strokeWidth="1" /></svg>
);
const MaxBox = ({ c, s }: { c: string; s: number }) => (
  <svg width={s} height={s} viewBox="0 0 14 14"><rect x=".5" y=".5" width="13" height="13" fill="none" stroke={c} /></svg>
);
const MinLine = ({ c, s }: { c: string; s: number }) => (
  <svg width={s} height={s} viewBox="0 0 14 14"><path d="M0 7H14" stroke={c} /></svg>
);

const SmallLockCorner = () => (
  <CornerChip>
    <svg width="9" height="11" viewBox="0 0 9 11"><path d="M1 5h7v5.500H1zM2.500 5V3a2 2 0 0 1 4 0v2" fill="#111" stroke="#111" strokeWidth=".8" /></svg>
  </CornerChip>
);

export default function App() {
  return (
    <>
      <Global />
      <Shell>
        <TitleBar>
          <InkLogo s={25} />
          <TitleText>*New document 1 - Inkscape</TitleText>
          <WinGroup>
            <WinBtn><MinLine c="#333" s={14} /></WinBtn>
            <WinBtn><MaxBox c="#333" s={14} /></WinBtn>
            <WinBtn><CloseX c="#333" s={15} /></WinBtn>
          </WinGroup>
        </TitleBar>
        <MenuBar>
          {menus.map(([m, w]) => <MenuItem key={m} $w={w}>{m}</MenuItem>)}
        </MenuBar>
        <ToolBar>
          {topGroups.map((g, i) => (
            <React.Fragment key={i}>
              {g.map(b => <TopBtn key={b.k}><Ico c={b.c}>{b.d}</Ico></TopBtn>)}
              <TopSep />
            </React.Fragment>
          ))}
          <TopLabel $w={22}>X:</TopLabel>
          <Spin $w={159}><SpinValue>43.390</SpinValue><SpinCell>−</SpinCell><SpinCell>+</SpinCell></Spin>
          <TopLabel $w={25}>Y:</TopLabel>
          <Spin $w={161}><SpinValue>43.634</SpinValue><SpinCell>−</SpinCell><SpinCell>+</SpinCell></Spin>
          <TopLabel $w={32}>W:</TopLabel>
          <Spin $w={152}><SpinValue>76.054</SpinValue><SpinCell>−</SpinCell><SpinCell>+</SpinCell></Spin>
          <TopBtn $w={69} $pl={6}>
            <Ico>
              <path d="M1 7.500H9V15.500H1zM7.500 7.500V3.500a3 3 0 0 1 6 0V6.500H12V3.500a1.500 1.500 0 0 0-3 0V7.500z" />
            </Ico>
          </TopBtn>
          <TopLabel $w={21}>H:</TopLabel>
          <Spin $w={152}><SpinValue>78.599</SpinValue><SpinCell>−</SpinCell><SpinCell>+</SpinCell></Spin>
          <UnitBox>mm<Tri $s={4} /></UnitBox>
          <TopSep />
          <ScaleGroup>
            {scaleIcons.map((d, i) => <ScaleBtn key={i}><Ico>{d}</Ico></ScaleBtn>)}
          </ScaleGroup>
        </ToolBar>
        <Main>
          <ToolColumn $w={76} $top={5}>
            <Column items={leftItems} set={tools} h={58} w={67} />
          </ToolColumn>
          <CanvasArea>
            <RulerRow>
              <Corner $w={17}><SmallLockCorner /></Corner>
              <TopRuler />
              <Corner $w={18}><CornerChip>1</CornerChip></Corner>
            </RulerRow>
            <CanvasRow>
              <LeftRuler />
              <Surface>
                <Page>
                  <Art viewBox="481.500 222.500 300.600 426.300" preserveAspectRatio="none">
                    <polygon points="637,247 553,345 553,420 613,408 637,330" fill="#8d8dc6" />
                    <polygon points="637,247 668,285 668,322 637,330" fill="#d7d7ff" />
                    <polygon points="553,420 580,422 613,414 613,408" fill="#b4b4e6" />
                    <ellipse cx="656" cy="401" rx="43.500" ry="91" fill="#0000ff" />
                    <polygon points="587,285 609,319 652,309 628,344 649,381 611,367 582,397 580,360 543,340 578,324" fill="#ff0000" />
                  </Art>
                </Page>
                <Float>
                  <FloatTitle>
                    <InkLogo s={24} />
                    <FloatName>Layers (Shift+Ctrl+L)</FloatName>
                    <FloatWinBtn $w={68}><MinLine c="#a0a0a0" s={14} /></FloatWinBtn>
                    <FloatWinBtn $w={72}><MaxBox c="#a0a0a0" s={14} /></FloatWinBtn>
                    <FloatWinBtn $w={68}><CloseX c="#999" s={15} /></FloatWinBtn>
                  </FloatTitle>
                  <DlgHeader $dim>
                    <LayersGlyph>
                      <Ico s={42}>
                        <path d="M4 .5H16L13 3.900H0.500zM4 6.200H16L13 9.600H0.500zM4 11.900H16L13 15.300H0.500z" />
                      </Ico>
                    </LayersGlyph>
                    <HeaderLabel>Layers (Shift+Ctrl+L)</HeaderLabel>
                    <MiniButtons />
                  </DlgHeader>
                  <ListFrame>
                    <LayerRow $sel><LayerEye><EyeIcon /></LayerEye><LayerLock><OpenLock /></LayerLock>Star</LayerRow>
                    <LayerRow><LayerEye><EyeIcon /></LayerEye><LayerLock><OpenLock /></LayerLock>Ellipse</LayerRow>
                    <LayerRow><LayerEye><EyeIcon /></LayerEye><LayerLock><OpenLock /></LayerLock>3d box</LayerRow>
                  </ListFrame>
                  <ListTools>
                    <GlyphBtn><Chev d="M7 1V13M1 7H13" /></GlyphBtn>
                    <GlyphBtn><Chev d="M1 7H13" /></GlyphBtn>
                    <Spacer />
                    <GlyphBtn $w={35.500}><Chev d="M1 2H13M1 11 7 5l6 6" c="#7e7e7e" /></GlyphBtn>
                    <GlyphBtn $w={35.500}><Chev d="M1 10 7 4l6 6" c="#7e7e7e" /></GlyphBtn>
                    <GlyphBtn $w={35.500}><Chev d="M1 4l6 6 6-6" /></GlyphBtn>
                    <GlyphBtn $w={35.500}><Chev d="M1 2l6 6 6-6M1 12H13" /></GlyphBtn>
                  </ListTools>
                  <BlendRow $pad="4px 13px 9px 0">
                    Blend mode:
                    <SelectBox $w={142} $h={38}>Normal<Tri $s={5} $c="#7e7e7e" /></SelectBox>
                  </BlendRow>
                  <HRule $bottom={8} />
                  <SliderRow $lit>
                    <SliderTrack $w={488}>Blur (%)</SliderTrack>
                    <SliderValue $c="#ccc">0.0</SliderValue>
                    <SliderStep>−</SliderStep><SliderStep $lit>+</SliderStep>
                  </SliderRow>
                  <SliderRow $lit>
                    <SliderTrack $w={488} $bg={BLUE}>Opacity (%)</SliderTrack>
                    <SliderValue $c="#ccc">100.0</SliderValue>
                    <SliderStep $lit>−</SliderStep><SliderStep>+</SliderStep>
                  </SliderRow>
                </Float>
              </Surface>
              <VTrack><VThumb /></VTrack>
            </CanvasRow>
            <HTrack>
              <HThumb />
              <CmsButton />
            </HTrack>
          </CanvasArea>

          <Dock>
            <DlgHeader>
              <Ico>
                <path d="M.2 9.500 4.500 5.700V8H9.300L9.200 11.800 14 11.800V16H11.800V13.300H7.600V16H4.500V13H4.500L.2 9.500z" transform="scale(.95)" />
                <circle cx="10.200" cy="4.800" r="4.800" />
                <path d="M10.200 2.200V5.600H7.200" fill="none" stroke={BG} strokeWidth=".9" />
              </Ico>
              <HeaderLabel>Undo History (Shift+Ctrl+H)</HeaderLabel>
              <MiniButtons />
            </DlgHeader>
            <Frame $h={103} $p="3px 3px">
              <HistoryList>
                <HistoryRow><Arrowlet /><span>Move</span></HistoryRow>
                <HistoryRow><Arrowlet /><span>Move</span></HistoryRow>
                <HistoryRow $sel><Arrowlet /><span>Move</span></HistoryRow>
              </HistoryList>
            </Frame>
            <DlgHeader>
              <Ico>
                <rect x="0" y="9" width="7" height="7" />
                <path d="M1 1.500C3 .3 5.500 1 5.500 2.500L5.800 3.300 12 10C13.500 9.700 15.300 10.200 16 11.500L14 11.600 13 12.800 14.500 14.500C13 15.500 11 14.800 10.300 13.300L10.200 11.800 4 5.500C2.500 5.800 1 4.700.5 3.300L3 3.400 3.300 2 1 1.500z" />
              </Ico>
              <HeaderLabel>Object Properties (Shift+Ctrl+O)</HeaderLabel>
              <MiniButtons />
            </DlgHeader>
            <Frame $h={293} $p="7px 0 0 0">
              <FormRow $label={50}><span>ID:</span><Entry>path893</Entry></FormRow>
              <FormRow $label={50} $top={4}><span>Label:</span><Entry>#path893</Entry></FormRow>
              <FormRow $label={50} $top={4}><span>Title:</span><Entry /></FormRow>
              <DescLabel>Description:</DescLabel>
              <DescBox />
              <CheckGrid>
                <CheckLine $h={26}><Box />Hide</CheckLine>
                <CheckLine $h={26}><Box />Lock</CheckLine>
                <CheckLine $h={44}>
                  <Box $on><svg width="12" height="12" viewBox="0 0 12 12"><path d="M2 6l3 3 5-6" fill="none" stroke="#fff" strokeWidth="2" /></svg></Box>
                  Preserve Ratio
                </CheckLine>
                <PlainBtn $ml={-4}>Set</PlainBtn>
              </CheckGrid>
              <Expander $top={1}><Tri $dir="right" $s={5} $c="#7a7a7a" />Interactivity</Expander>
            </Frame>
            <DlgHeader>
              <Ico>
                <circle cx="6.500" cy="6" r="4.800" fill="none" stroke="currentColor" strokeWidth="1.400" />
                <path d="M10 10.300l1.200-1.200 4 4.200a.9.900 0 0 1-1.200 1.300z" />
              </Ico>
              <HeaderLabel>Find/Replace (Ctrl+F)</HeaderLabel>
              <MiniButtons />
            </DlgHeader>
            <Frame $h={276} $p="3px 0 0 0">
              <FormRow $lit $label={45}><span>Find:</span><Entry /></FormRow>
              <FormRow $lit $label={72} $top={6}><span>Replace:</span><Entry /></FormRow>
              <ScopeColumns>
                <ScopeCol $w={128}>
                  <ScopeHead>Search in</ScopeHead>
                  <RadioLine><Radio $on />Text</RadioLine>
                  <RadioLine><Radio />Properties</RadioLine>
                </ScopeCol>
                <ScopeCol $w={240}>
                  <ScopeHead>Scope</ScopeHead>
                  <RadioLine><Radio $on />All</RadioLine>
                  <RadioLine><Radio />Current layer</RadioLine>
                  <RadioLine><Radio />Selection</RadioLine>
                </ScopeCol>
              </ScopeColumns>
              <Expander $lit $top={8}><Tri $dir="right" $s={5} />Options</Expander>
              <ButtonRow>
                <PlainBtn $w={127} $lit>Find</PlainBtn>
                <PlainBtn $w={127}>Replace All</PlainBtn>
              </ButtonRow>
            </Frame>
            <DlgHeader>
              <Ico>{commands.fillStroke}</Ico>
              <HeaderLabel>Fill and Stroke (Shift+Ctrl+F)</HeaderLabel>
              <MiniButtons />
            </DlgHeader>
            <Frame $h={540}>
              <Notebook>
                <TabBar>
                  <Tab $on $w={68}>
                    <Ico s={16}><rect x="0" y="0" width="16" height="16" /></Ico>Fill
                  </Tab>
                  <Tab $w={148}>
                    <Ico s={16} c="#8c8c8c"><rect x=".5" y=".5" width="15" height="15" fill="none" stroke="currentColor" /></Ico>Stroke paint
                  </Tab>
                  <Tab $w={160}>
                    <Ico s={16} c="#8c8c8c"><path d="M1 2H14V0L16 2.500 14 5V3H1zM1 7H5V8H1zM8 7H12V8H8zM1 14H16V15H1z" /></Ico>Stroke style
                  </Tab>
                </TabBar>
                <PaintRow>
                  {paintIcons.map((d, i) => (
                    <PaintBtn key={i} $on={i === 9}>
                      <Ico s={16} c={i === 0 ? '#666' : '#777'}>{d}</Ico>
                    </PaintBtn>
                  ))}
                </PaintRow>
                <NoObjects>No objects</NoObjects>
              </Notebook>
              <BlendRow $pad="9px 13px 9px 0">
                Blend mode:
                <SelectBox $w={143} $h={32}>Normal<Tri $s={5} $c="#7e7e7e" /></SelectBox>
              </BlendRow>
              <HRule $bottom={9} />
              <SliderRow>
                <SliderTrack $w={412} $bg="#333">Blur (%)</SliderTrack>
                <SliderValue $c="#777">0.0</SliderValue>
                <SliderStep>−</SliderStep><SliderStep>+</SliderStep>
              </SliderRow>
              <SliderRow $lit>
                <SliderTrack $w={412} $bg="#333">Opacity (%)</SliderTrack>
                <SliderValue $c="#777">100.0</SliderValue>
                <SliderStep>−</SliderStep><SliderStep>+</SliderStep>
              </SliderRow>
            </Frame>
            <AlignHeader>
              <Ico s={40}>
                <path d="M.5 0H1.500V16H.5zM4 0H14V5H4zM4 7H16V12H4z" />
              </Ico>
              <AlignLabel>Align and Distribute (Shift+Ctrl+A)</AlignLabel>
              <AlignCaret><Tri $s={4} /></AlignCaret>
            </AlignHeader>
          </Dock>

          <ToolColumn $w={71} $top={6}>
            <Column items={cmdItems} set={commands} h={59} w={60} />
          </ToolColumn>
          <ToolColumn $w={60} $top={5} $ml={2}>
            <Column items={snapItems} set={snapIcons} h={58.800} w={60} />
          </ToolColumn>
        </Main>
        <PaletteRow>
          <NoneSwatch viewBox="0 0 19 21">
            <rect width="19" height="21" fill="#fff" />
            <path d="M1 0 18 21M18 0 1 21" stroke="#800000" strokeWidth="1.300" />
          </NoneSwatch>
          <SwatchStrip>
            {visibleSwatches.map((c, i) => <Swatch key={i} style={{ background: c }} />)}
          </SwatchStrip>
          <PaletteEnd><Tri $dir="left" $s={6} /></PaletteEnd>
        </PaletteRow>
        <PaletteTrack><PaletteThumb /></PaletteTrack>
        <Status>
          <FillStroke>
            <span>Fill:</span><span>N/A</span>
            <span>Stroke:</span><span>N/A</span>
          </FillStroke>
          <StatusKey $w={19}>O:</StatusKey>
          <Spin $w={71} $h={53}>
            <SpinValue>100</SpinValue>
            <SpinCell $w={17}>−</SpinCell><SpinCell $w={17}>+</SpinCell>
          </Spin>
          <StatusIcon $w={44}><EyeIcon s={20} /></StatusIcon>
          <StatusIcon $w={30}><OpenLock s={20} /></StatusIcon>
          <StatusIcon $w={5} />
          <LayerCombo>•Star<Tri $s={5} /></LayerCombo>
          <Message><Strong>Ctrl</Strong>: click to select in groups; drag to move hor/vert</Message>
          <Coords>
            <CoordKey>X:</CoordKey><Right>-295.20</Right>
            <CoordKey>Y:</CoordKey><Right>25.32</Right>
          </Coords>
          <StatusKey $w={33} $pl={9}>Z:</StatusKey>
          <Spin $w={117} $h={53} $lit>
            <SpinValue $pad={18}>70%</SpinValue>
            <SpinCell $w={20} $lit>−</SpinCell><SpinCell $w={20} $lit>+</SpinCell>
          </Spin>
          <StatusKey $w={36} $pl={12}>R:</StatusKey>
          <Spin $w={128} $h={53} $lit>
            <SpinValue $pad={23}>0.00°</SpinValue>
            <SpinCell $w={21} $lit>−</SpinCell><SpinCell $w={21} $lit>+</SpinCell>
          </Spin>
        </Status>
      </Shell>
    </>
  );
}
